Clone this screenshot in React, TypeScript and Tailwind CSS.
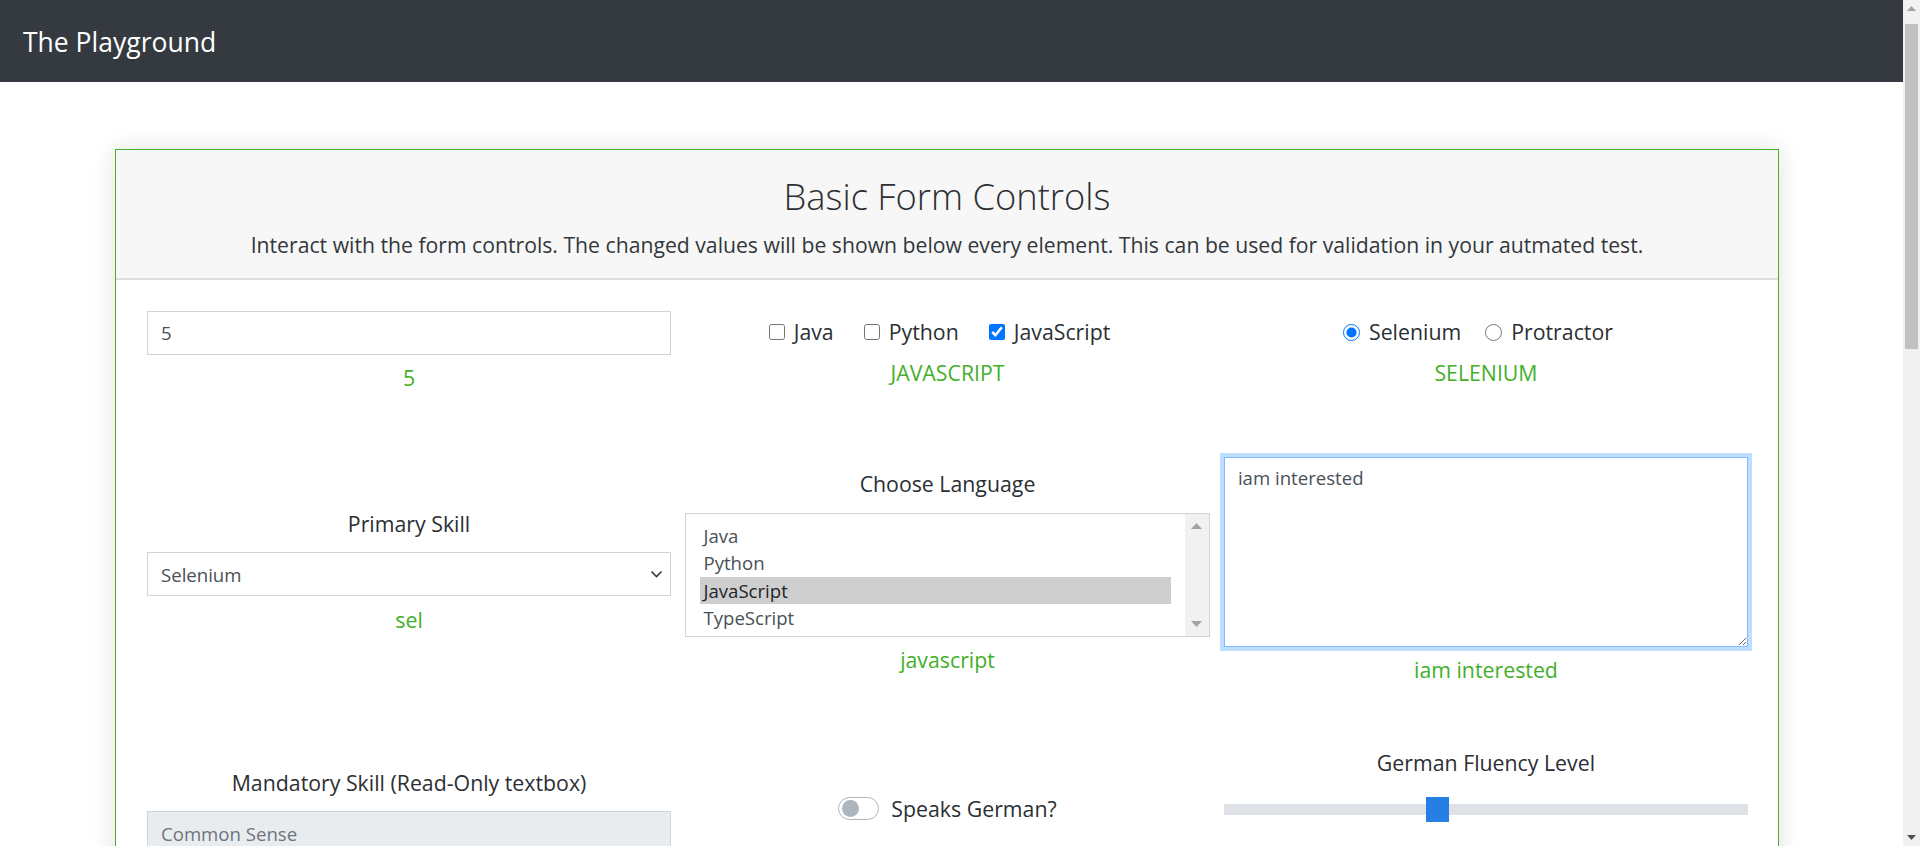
import React from "react";

function Output({ children }: { children: React.ReactNode }) {
  return (
    <div className="text-[21.3px] leading-[33.6px] text-[#43b02a]">{children}</div>
  );
}

function Label({ children }: { children: React.ReactNode }) {
  return (
    <div className="text-[21.3px] leading-[33.6px] text-[#2b2f33]">{children}</div>
  );
}

function PageScrollbar() {
  return (
    <div className="flex h-full w-[17px] shrink-0 flex-col bg-[#f1f1f1]">
      <div className="flex h-[17px] items-center justify-center">
        <svg width="9" height="5" viewBox="0 0 9 5">
          <path d="M4.5 0 L9 5 L0 5 Z" fill="#a3a3a3" />
        </svg>
      </div>
      <div className="flex-1 px-[2px] pt-[7px]">
        <div className="h-[325px] w-full bg-[#c1c1c1]" />
      </div>
      <div className="flex h-[17px] items-center justify-center">
        <svg width="9" height="5" viewBox="0 0 9 5">
          <path d="M0 0 L9 0 L4.5 5 Z" fill="#505050" />
        </svg>
      </div>
    </div>
  );
}

function ListBox() {
  const items = ["Java", "Python", "JavaScript", "TypeScript"];
  return (
    <div className="flex h-[124px] w-full border border-[#ced4da] bg-white">
      <div className="flex-1 pl-[14px] pr-[14px] pt-[8px]">
        {items.map((it) => (
          <div
            key={it}
            className={
              it === "JavaScript"
                ? "h-[27.4px] bg-[#cecece] px-[3px] text-[18.6px] leading-[27.4px] text-[#212529]"
                : "h-[27.4px] px-[3px] text-[18.6px] leading-[27.4px] text-[#495057]"
            }
          >
            {it}
          </div>
        ))}
      </div>
      <div className="flex w-[24px] flex-col justify-between bg-[#f1f1f1] py-[9px]">
        <div className="flex justify-center">
          <svg width="11" height="6" viewBox="0 0 11 6">
            <path d="M5.5 0 L11 6 L0 6 Z" fill="#a3a3a3" />
          </svg>
        </div>
        <div className="flex justify-center">
          <svg width="11" height="6" viewBox="0 0 11 6">
            <path d="M0 0 L11 0 L5.5 6 Z" fill="#a3a3a3" />
          </svg>
        </div>
      </div>
    </div>
  );
}

export default function App() {
  return (
    <div className="flex h-[846px] w-full overflow-hidden bg-white font-['Open_Sans',sans-serif] text-[#212529]">
      <div className="flex min-w-0 flex-1 flex-col">
        <nav className="flex h-[82px] shrink-0 items-center bg-[#343a40] pl-[23px] pt-[3px]">
          <span className="text-[26.5px] leading-none text-white">The Playground</span>
        </nav>
        <main className="pt-[67px]">
          <section className="ml-[115px] w-[1664px] border border-[#46b22e] bg-white shadow-[0_0_24px_rgba(0,0,0,0.12)]">
            <header className="flex flex-col items-center border-b-2 border-[#dedede] bg-[#f7f7f7] pb-[16px] pt-[22px]">
              <h1 className="text-[36.3px] font-light leading-[48px] text-[#2b2f33]">
                Basic Form Controls
              </h1>
              <p className="mt-[8px] text-[21.2px] font-normal leading-[33.6px] text-[#33373b]">
                Interact with the form controls. The changed values will be shown below every
                element. This can be used for validation in your autmated test.
              </p>
            </header>

            <div className="flex flex-col pl-[31px] pr-[30px] pt-[31px]">
              {/* Row 1 */}
              <div className="grid grid-cols-3 items-center gap-x-[14.4px]">
                <div className="flex flex-col items-center">
                  <input
                    defaultValue="5"
                    className="h-[44px] w-full border border-[#ced4da] bg-white px-[13px] text-[18.6px] text-[#495057] outline-none"
                  />
                  <div className="mt-[6px]">
                    <Output>5</Output>
                  </div>
                </div>

                <div className="flex flex-col items-center">
                  <div className="flex h-[33.6px] items-center justify-center gap-[30px] pr-[16px]">
                    <label className="flex items-center">
                      <input type="checkbox" className="m-0 mr-[9px] h-[16px] w-[16px]" />
                      <span className="text-[21.3px] leading-[33.6px] text-[#2b2f33]">Java</span>
                    </label>
                    <label className="flex items-center">
                      <input type="checkbox" className="m-0 mr-[9px] h-[16px] w-[16px]" />
                      <span className="text-[21.3px] leading-[33.6px] text-[#2b2f33]">Python</span>
                    </label>
                    <label className="flex items-center">
                      <input
                        type="checkbox"
                        defaultChecked
                        className="m-0 mr-[9px] h-[16px] w-[16px]"
                      />
                      <span className="text-[21.3px] leading-[33.6px] text-[#2b2f33]">
                        JavaScript
                      </span>
                    </label>
                  </div>
                  <div className="mt-[7px]">
                    <Output>JAVASCRIPT</Output>
                  </div>
                </div>

                <div className="flex flex-col items-center">
                  <div className="flex h-[33.6px] items-center justify-center gap-[24px] pr-[16px]">
                    <label className="flex items-center">
                      <input
                        type="radio"
                        name="tool"
                        defaultChecked
                        className="m-0 mr-[9px] h-[17px] w-[17px]"
                      />
                      <span className="text-[21.3px] leading-[33.6px] text-[#2b2f33]">
                        Selenium
                      </span>
                    </label>
                    <label className="flex items-center">
                      <input type="radio" name="tool" className="m-0 mr-[9px] h-[17px] w-[17px]" />
                      <span className="text-[21.3px] leading-[33.6px] text-[#2b2f33]">
                        Protractor
                      </span>
                    </label>
                  </div>
                  <div className="mt-[7px]">
                    <Output>SELENIUM</Output>
                  </div>
                </div>
              </div>

              {/* Row 2 */}
              <div className="mt-[63px] grid grid-cols-3 items-center gap-x-[14.4px]">
                <div className="flex flex-col items-center">
                  <Label>Primary Skill</Label>
                  <div className="relative mt-[12px] w-full">
                    <select
                      defaultValue="sel"
                      className="h-[44px] w-full appearance-none border border-[#ced4da] bg-white px-[13px] text-[18.6px] text-[#495057] outline-none"
                    >
                      <option value="sel">Selenium</option>
                      <option value="pro">Protractor</option>
                    </select>
                    <svg
                      className="pointer-events-none absolute right-[8px] top-[16px]"
                      width="13"
                      height="12"
                      viewBox="0 0 13 12"
                    >
                      <path
                        d="M1.5 3.5 L6.5 8.5 L11.5 3.5"
                        fill="none"
                        stroke="#343a40"
                        strokeWidth="1.6"
                      />
                    </svg>
                  </div>
                  <div className="mt-[7px]">
                    <Output>sel</Output>
                  </div>
                </div>

                <div className="flex flex-col items-center">
                  <Label>Choose Language</Label>
                  <div className="mt-[12px] w-full">
                    <ListBox />
                  </div>
                  <div className="mt-[6px]">
                    <Output>javascript</Output>
                  </div>
                </div>

                <div className="flex flex-col items-center">
                  <textarea
                    defaultValue="iam interested"
                    className="h-[190px] w-full border border-[#80bdff] bg-white px-[13px] pt-[6px] text-[18.6px] leading-[28px] text-[#495057] shadow-[0_0_0_4px_rgba(0,123,255,0.25)] outline-none"
                  />
                  <div className="mt-[6px]">
                    <Output>iam interested</Output>
                  </div>
                </div>
              </div>

              {/* Row 3 */}
              <div className="mt-[59px] grid grid-cols-3 items-start gap-x-[14.4px]">
                <div className="mt-[20px] flex flex-col items-center">
                  <Label>Mandatory Skill (Read-Only textbox)</Label>
                  <input
                    readOnly
                    defaultValue="Common Sense"
                    className="mt-[12px] h-[44px] w-full border border-[#ced4da] bg-[#e9ecef] px-[13px] text-[18.6px] text-[#6c757d] outline-none"
                  />
                </div>

                <div className="mt-[46px] flex flex-col items-center">
                  <div className="flex h-[33.6px] items-center">
                    <div className="flex h-[23px] w-[41px] items-center rounded-full border border-[#adb5bd] bg-white px-[3px]">
                      <div className="h-[17px] w-[17px] rounded-full bg-[#adb5bd]" />
                    </div>
                    <span className="ml-[12px] text-[21.3px] leading-[33.6px] text-[#2b2f33]">
                      Speaks German?
                    </span>
                  </div>
                </div>

                <div className="flex flex-col items-center">
                  <Label>German Fluency Level</Label>
                  <div className="relative mt-[18px] flex h-[25px] w-full items-center">
                    <div className="h-[11px] w-full bg-[#dee2e6]" />
                    <div className="absolute left-[202px] top-0 h-[25px] w-[23px] bg-[#2680e3]" />
                  </div>
                </div>
              </div>
            </div>
            <div className="h-[80px]" />
          </section>
        </main>
      </div>
      <PageScrollbar />
    </div>
  );
}
